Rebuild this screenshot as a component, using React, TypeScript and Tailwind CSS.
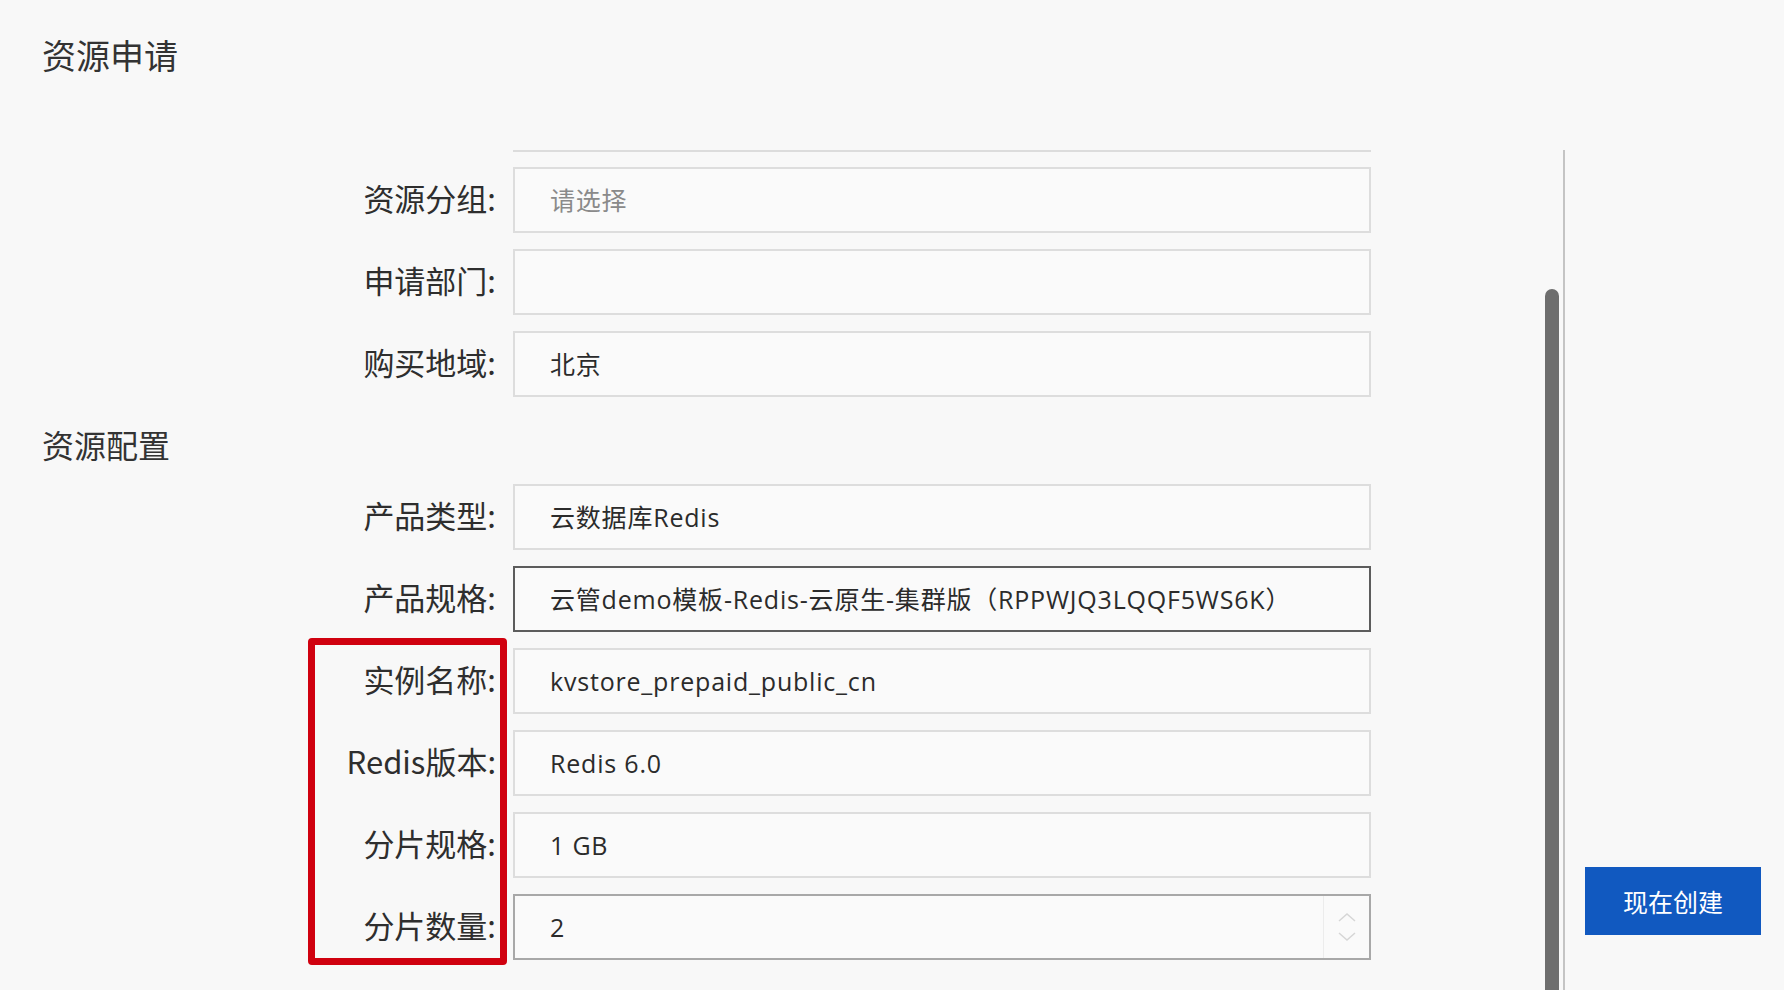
import type { FC } from "react";

type Field = {
  label: string;
  value: string;
  placeholder?: boolean;
  variant?: "focus" | "number";
};

const groupOne: Field[] = [
  { label: "资源分组:", value: "请选择", placeholder: true },
  { label: "申请部门:", value: "" },
  { label: "购买地域:", value: "北京" },
];

const groupTwo: Field[] = [
  { label: "产品类型:", value: "云数据库Redis" },
  {
    label: "产品规格:",
    value: "云管demo模板-Redis-云原生-集群版（RPPWJQ3LQQF5WS6K）",
    variant: "focus",
  },
  { label: "实例名称:", value: "kvstore_prepaid_public_cn" },
  { label: "Redis版本:", value: "Redis 6.0" },
  { label: "分片规格:", value: "1 GB" },
  { label: "分片数量:", value: "2", variant: "number" },
];

const latin = { fontFamily: '"Open Sans", "Noto Sans CJK SC", sans-serif' };

/**
 * One label + read-only box row
 */
const FormRow: FC<{ field: Field }> = ({ field }) => {
  const border =
    field.variant === "focus"
      ? "border-[#5c5c5c]"
      : field.variant === "number"
        ? "border-[#a8a8a8]"
        : "border-[#dddddd]";

  return (
    <div className="flex items-center gap-[16px] h-[66px]">
      <div className="w-[497px] text-right text-[31px] text-[#2e2e2e] leading-none pr-[1px] pb-[5px]">
        {field.label}
      </div>
      <div
        className={`relative w-[858px] h-full border-2 ${border} bg-[#fafafa] flex items-center pl-[35px]`}
      >
        <span
          className={`text-[25px] tracking-[0.8px] leading-none ${field.placeholder ? "text-[#8a8a8a]" : "text-[#2b2b2b]"}`}
          style={latin}
        >
          {field.value}
        </span>
        {field.variant === "number" && (
          <div className="absolute right-0 top-0 bottom-0 w-[46px] border-l border-[#ececec] flex flex-col items-center justify-center gap-[10px]">
            <svg width="20" height="10" viewBox="0 0 20 10">
              <path d="M2 9 L10 2 L18 9" fill="none" stroke="#d6d6d6" strokeWidth="1.5" />
            </svg>
            <svg width="20" height="10" viewBox="0 0 20 10">
              <path d="M2 1 L10 8 L18 1" fill="none" stroke="#d6d6d6" strokeWidth="1.5" />
            </svg>
          </div>
        )}
      </div>
    </div>
  );
};

const App: FC = () => {
  return (
    <div
      className="w-[1784px] h-[990px] overflow-hidden bg-[#f8f8f8] flex flex-col"
      style={{ fontFamily: '"Noto Sans CJK SC", "Noto Sans", sans-serif' }}
    >
      {/* page title */}
      <div className="h-[150px] shrink-0 pl-[42px] pt-[35px]">
        <h1 className="text-[34px] leading-[1.2] text-[#333] font-normal">
          资源申请
        </h1>
      </div>

      <div className="flex flex-1 min-h-0">
        {/* scrolling form */}
        <div className="relative w-[1563px] overflow-hidden">
          <div className="ml-[513px] w-[858px] h-[2px] bg-[#dcdcdc]" />

          <div className="mt-[15px] flex flex-col gap-[16px]">
            {groupOne.map((f) => (
              <FormRow key={f.label} field={f} />
            ))}
          </div>

          <h2 className="mt-[28px] pl-[42px] text-[32px] leading-[1.2] text-[#333] font-normal">
            资源配置
          </h2>

          <div className="mt-[21px] flex flex-col gap-[16px]">
            {groupTwo.map((f) => (
              <FormRow key={f.label} field={f} />
            ))}
          </div>

          {/* highlight annotation */}
          <div className="absolute left-[308px] top-[488px] w-[199px] h-[327px] border-[7px] border-[#d0010f] rounded-[4px]" />

          {/* scrollbar thumb */}
          <div className="absolute left-[1545px] top-[139px] w-[14px] h-[800px] rounded-full bg-[#6e6e6e]" />
        </div>

        {/* action panel */}
        <div className="flex-1 border-l-2 border-[#c4c4c4] flex flex-col justify-end pl-[20px] pb-[55px]">
          <button className="w-[176px] h-[68px] bg-[#1159c0] text-white text-[25px] leading-none">
            现在创建
          </button>
        </div>
      </div>
    </div>
  );
};

export default App;
